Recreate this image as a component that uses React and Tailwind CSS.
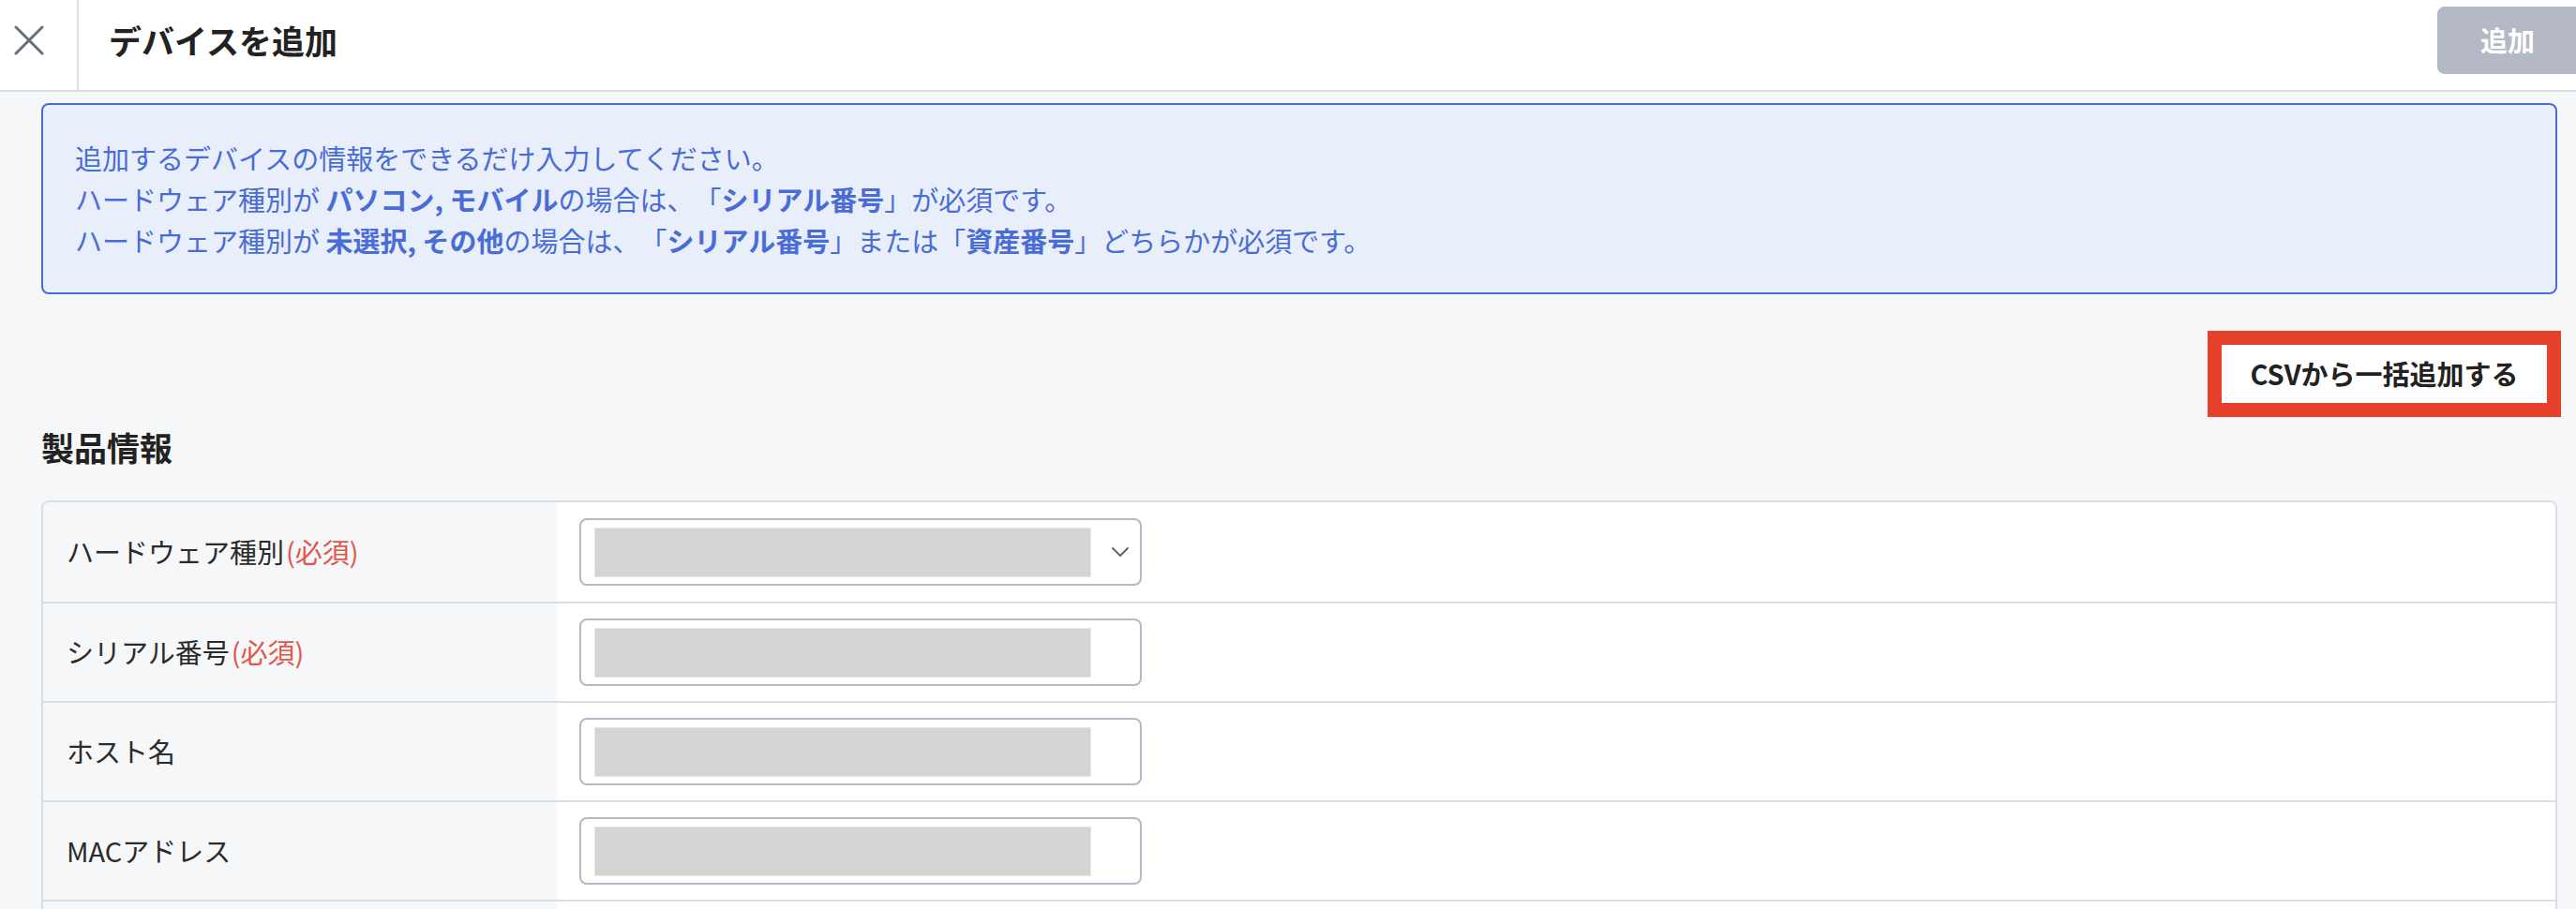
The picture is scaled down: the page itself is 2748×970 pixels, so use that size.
import { ChevronDown } from "lucide-react";

const rows = [
  { label: "ハードウェア種別", required: true, kind: "select" },
  { label: "シリアル番号", required: true, kind: "input" },
  { label: "ホスト名", required: false, kind: "input" },
  { label: "MACアドレス", required: false, kind: "input" },
  { label: "", required: false, kind: "input" },
];

function Field({ kind }) {
  return (
    <div className="flex h-[72px] w-[600px] items-center rounded-lg border-2 border-[#b4b9c5] bg-white pl-[14px] pr-[5px]">
      <div className="h-[53px] w-[530px] border border-[#e6e6e6] bg-[#d4d4d4]" />
      {kind === "select" && (
        <ChevronDown size={32} strokeWidth={1.5} className="ml-auto text-[#5f6673]" />
      )}
    </div>
  );
}

export default function App() {
  return (
    <div
      className="h-[970px] w-[2748px] overflow-hidden bg-[#f6f7f9] text-[#222] [text-spacing-trim:space-all]"
      style={{ fontFamily: '"Noto Sans CJK JP", "Noto Sans", sans-serif' }}
    >
      <header className="flex h-[98px] items-start overflow-hidden border-b-2 border-[#d8dde6] bg-white">
        <div className="flex h-full w-[84px] shrink-0 border-r-2 border-[#d8dde6] pl-[15px] pt-[27px]">
          <svg width="32" height="32" viewBox="0 0 32 32" fill="none">
            <path
              d="M2 2L30 30M30 2L2 30"
              stroke="#676e7b"
              strokeWidth="3"
              strokeLinecap="round"
            />
          </svg>
        </div>
        <h1 className="ml-[32px] mt-[18px] text-[35px] font-bold leading-[50px] text-[#222]">
          デバイスを追加
        </h1>
        <button
          type="button"
          className="ml-auto mr-[-12px] mt-[7px] h-[72px] w-[160px] shrink-0 rounded-lg bg-[#b4b9c5] pr-[10px] text-[29px] font-bold text-white"
        >
          追加
        </button>
      </header>

      <main className="pl-[44px] pr-[20px] pt-[12px]">
        <div className="rounded-lg border-2 border-[#4a6cd6] bg-[#e8eefa] px-[34px] py-[34px] text-[29px] leading-[44px] text-[#4a6cd6]">
          <p>追加するデバイスの情報をできるだけ入力してください。</p>
          <p>
            ハードウェア種別が <b className="font-bold">パソコン, モバイル</b>
            の場合は、「<b className="font-bold">シリアル番号</b>」が必須です。
          </p>
          <p>
            ハードウェア種別が <b className="font-bold">未選択, その他</b>
            の場合は、「<b className="font-bold">シリアル番号</b>」または「
            <b className="font-bold">資産番号</b>」どちらかが必須です。
          </p>
        </div>

        <div className="mt-[39px] flex justify-end">
          <button
            type="button"
            className="mr-[-4px] flex h-[92px] w-[377px] items-center justify-center border-[15px] border-[#e8412b] bg-white text-[29px] font-bold text-[#222]"
          >
            CSVから一括追加する
          </button>
        </div>

        <h2 className="mt-[7px] text-[35px] font-bold leading-[50px] text-[#222]">
          製品情報
        </h2>

        <div className="mt-[32px] overflow-hidden rounded-t-lg border-2 border-[#d8dde6] bg-white">
          {rows.map((row, i) => (
            <div
              key={i}
              className={`flex h-[106px] ${i > 0 ? "border-t-2 border-[#d8dde6]" : ""}`}
            >
              <div className="flex w-[548px] shrink-0 items-center bg-[#f6f7f9] pl-[25px] text-[29px] text-[#2b2b2b]">
                {row.label}
                {row.required && (
                  <span className="ml-[2px] text-[#e0564a]">(必須)</span>
                )}
              </div>
              <div className="flex flex-1 items-center bg-white pl-[24px]">
                <Field kind={row.kind} />
              </div>
            </div>
          ))}
        </div>
      </main>
    </div>
  );
}
